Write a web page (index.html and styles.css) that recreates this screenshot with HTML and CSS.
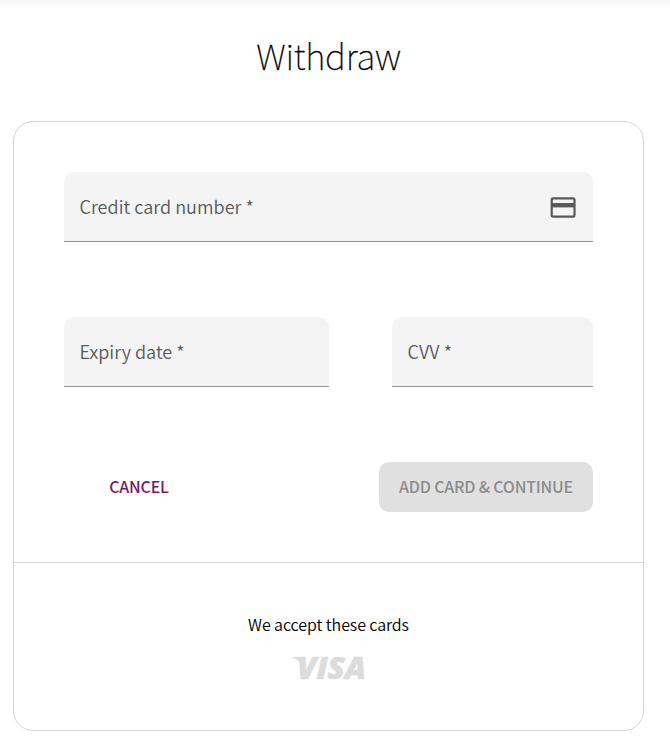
FILE: index.html
```html
<!DOCTYPE html>
<html lang="en">

<head>
  <meta charset="UTF-8" />
  <meta name="viewport" content="width=device-width, initial-scale=1.0" />
  <title>Withdraw</title>
  <link rel="stylesheet" href="styles.css">
</head>

<body>
  <div class="top-shadow"></div>
  <h1>Withdraw</h1>

  <main class="card">
    <form class="card-form">
      <div class="field">
        <label>Credit card number *</label>
        <svg class="card-icon" width="26" height="22" viewBox="0 0 26 22">
          <rect x="1.7" y="2.4" width="22.8" height="18.2" rx="1.5" fill="none" stroke="#58585a" stroke-width="2.2" />
          <rect x="1.5" y="7" width="23" height="4.4" fill="#58585a" />
        </svg>
      </div>

      <div class="field-row">
        <div class="field expiry">
          <label>Expiry date *</label>
        </div>
        <div class="field cvv">
          <label>CVV *</label>
        </div>
      </div>

      <div class="actions">
        <button type="button" class="btn-cancel">CANCEL</button>
        <button type="button" class="btn-submit" disabled>ADD CARD &amp; CONTINUE</button>
      </div>
    </form>

    <div class="accepted">
      <p>We accept these cards</p>
      <svg class="visa" width="84" height="44" viewBox="0 0 84 44">
        <path d="M5 11 H15 L19 25 C15 17 11 13 5 12 Z" />
        <text x="10" y="33" textLength="69" lengthAdjust="spacingAndGlyphs">VISA</text>
      </svg>
    </div>
  </main>
</body>

</html>
```
FILE: styles.css
```css
* {
  box-sizing: border-box;
}

body {
  margin: 0;
  background-color: #fff;
  font-family: "Noto Sans CJK SC", "Noto Sans", sans-serif;
}

.top-shadow {
  height: 10px;
  background: linear-gradient(#f6f6f6, #fff);
}

h1 {
  margin: 22px 0 0;
  height: 89px;
  padding-right: 13px;
  line-height: 45px;
  font-size: 35px;
  font-weight: 100;
  letter-spacing: -0.25px;
  text-align: center;
  color: #000;
  -webkit-text-stroke: 0.3px #000;
}

.card {
  width: 631px;
  height: 610px;
  margin-left: 13px;
  border: 1px solid #d3d3d3;
  border-radius: 20px;
}

.card-form {
  padding: 50px;
  border-bottom: 1px solid #d3d3d3;
}

.field {
  display: flex;
  justify-content: space-between;
  align-items: center;
  height: 70px;
  padding: 0 17px 0 15.5px;
  background-color: #f4f4f4;
  border-bottom: 1px solid #949494;
  border-radius: 10px 10px 0 0;
}

.field label {
  padding-bottom: 2px;
  font-size: 18px;
  font-weight: 350;
  letter-spacing: 0.04px;
  color: #58585a;
}

.field-row {
  display: flex;
  justify-content: space-between;
  margin: 75px 0;
}

.expiry {
  width: 265px;
}

.cvv {
  width: 201px;
}

/* Buttons */
.actions {
  display: flex;
  justify-content: space-between;
}

button {
  height: 50px;
  padding: 0 0 2px;
  border: none;
  border-radius: 10px;
  font-family: inherit;
  font-size: 16px;
  font-weight: 500;
  letter-spacing: -0.2px;
}

.btn-cancel {
  width: 150px;
  background: none;
  color: #7b1a67;
}

.btn-submit {
  width: 214px;
  background-color: #e0e0e0;
  color: #8c8c8c;
}

/* Accepted cards */
.accepted {
  display: flex;
  flex-direction: column;
  align-items: center;
  padding-top: 49px;
}

.accepted p {
  margin: 0 0 10px;
  font-size: 16px;
  font-weight: 350;
  line-height: 24px;
  letter-spacing: -0.08px;
  color: #000;
}

.visa {
  fill: #dcdcdc;
}

.visa text {
  font-family: "Open Sans", sans-serif;
  font-size: 30px;
  font-weight: 800;
  font-style: italic;
  stroke: #dcdcdc;
  stroke-width: 0.6px;
}
```
